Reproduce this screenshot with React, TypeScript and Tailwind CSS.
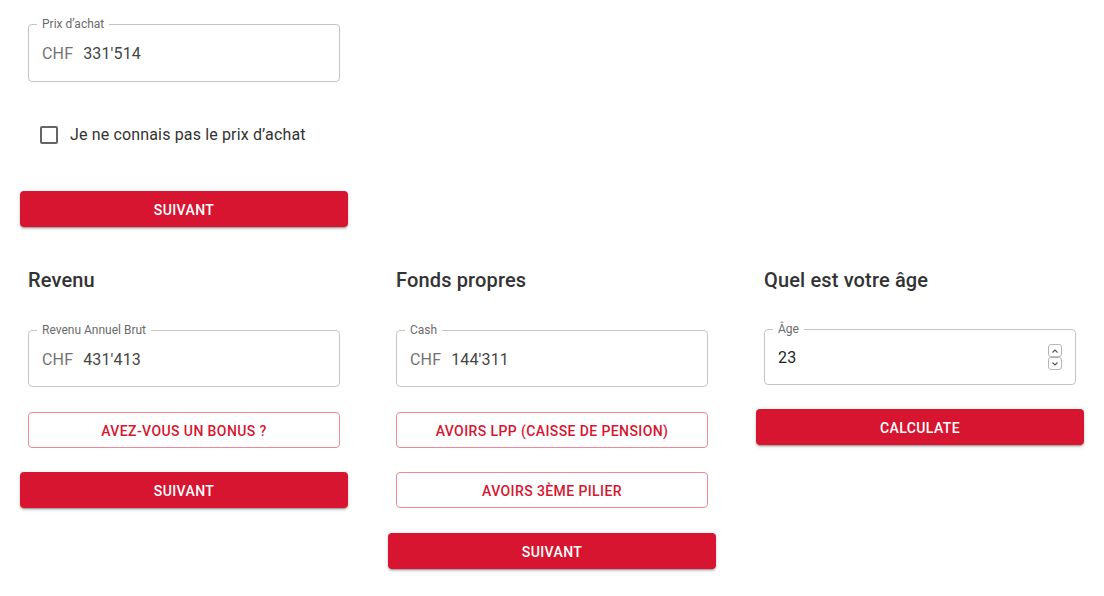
import React from "react";

function OutlinedField({
  label,
  adornment,
  value,
  heightClass = "h-[57px]",
  spinner = false,
}: {
  label: string;
  adornment?: string;
  value: string;
  heightClass?: string;
  spinner?: boolean;
}) {
  return (
    <div className={`relative ${heightClass} rounded-[4px] border border-[#c4c4c4] flex items-center pl-[13px] pr-[13px]`}>
      <span className="absolute left-[8px] top-[-9px] bg-white px-[5px] text-[12px] leading-[16px] text-[#6b6b6b]">
        {label}
      </span>
      {adornment && <span className="pt-[2px] text-[16px] tracking-[0.15px] text-[#737373] mr-[10px]">{adornment}</span>}
      <span className={`pt-[2px] text-[16px] tracking-[0.15px] ${adornment ? "text-[#454545]" : "text-[#1f1f1f]"}`}>{value}</span>
      {spinner && (
        <div className="ml-auto flex flex-col">
          <div className="w-[14px] h-[13px] border border-[#b5b5b5] rounded-[3px] flex items-center justify-center">
            <svg width="8" height="6" viewBox="0 0 8 6" fill="none">
              <path d="M1.5 4.5 L4 2 L6.5 4.5" stroke="#555" strokeWidth="1.1" />
            </svg>
          </div>
          <div className="w-[14px] h-[13px] border border-[#b5b5b5] rounded-[3px] flex items-center justify-center">
            <svg width="8" height="6" viewBox="0 0 8 6" fill="none">
              <path d="M1.5 1.5 L4 4 L6.5 1.5" stroke="#555" strokeWidth="1.1" />
            </svg>
          </div>
        </div>
      )}
    </div>
  );
}

function ContainedButton({ children }: { children: React.ReactNode }) {
  return (
    <button className="w-full h-[36px] pt-[2px] rounded-[4px] bg-[#d71530] text-white text-[14px] font-medium uppercase tracking-[0.4px] shadow-[0_3px_1px_-2px_rgba(0,0,0,0.2),0_2px_2px_0_rgba(0,0,0,0.14),0_1px_5px_0_rgba(0,0,0,0.12)]">
      {children}
    </button>
  );
}

function OutlinedButton({ children }: { children: React.ReactNode }) {
  return (
    <button className="w-full h-[36px] pt-[2px] rounded-[4px] border border-[#ec8a97] bg-white text-[#d71530] text-[14px] font-medium uppercase tracking-[0.4px]">
      {children}
    </button>
  );
}

export default function App() {
  return (
    <div
      className="w-[1104px] h-[596px] bg-white overflow-hidden pl-[20px] pt-[24px]"
      style={{ fontFamily: "Roboto, 'Noto Sans', sans-serif" }}
    >
      {/* Top block */}
      <div className="w-[328px]">
        <div className="px-[8px]">
          <OutlinedField label="Prix d’achat" adornment="CHF" value="331'514" heightClass="h-[58px]" />
        </div>
        <div className="mt-[44px] flex items-center pl-[20px] h-[18px]">
          <div className="w-[18px] h-[18px] border-2 border-[#666] rounded-[2px]" />
          <span className="ml-[12px] text-[16px] tracking-[0.15px] text-[#333]">Je ne connais pas le prix d’achat</span>
        </div>
        <div className="mt-[47px]">
          <ContainedButton>Suivant</ContainedButton>
        </div>
      </div>

      {/* Three columns */}
      <div className="mt-[37px] flex gap-[40px]">
        <div className="w-[328px]">
          <h2 className="px-[8px] h-[32px] leading-[32px] text-[20px] font-medium tracking-[0.15px] text-[#333]">Revenu</h2>
          <div className="mt-[34px] px-[8px]">
            <OutlinedField label="Revenu Annuel Brut" adornment="CHF" value="431'413" />
          </div>
          <div className="mt-[25px] px-[8px]">
            <OutlinedButton>Avez-vous un bonus ?</OutlinedButton>
          </div>
          <div className="mt-[24px]">
            <ContainedButton>Suivant</ContainedButton>
          </div>
        </div>

        <div className="w-[328px]">
          <h2 className="px-[8px] h-[32px] leading-[32px] text-[20px] font-medium tracking-[0.15px] text-[#333]">Fonds propres</h2>
          <div className="mt-[34px] px-[8px]">
            <OutlinedField label="Cash" adornment="CHF" value="144'311" />
          </div>
          <div className="mt-[25px] px-[8px]">
            <OutlinedButton>Avoirs LPP (caisse de pension)</OutlinedButton>
          </div>
          <div className="mt-[24px] px-[8px]">
            <OutlinedButton>Avoirs 3ème pilier</OutlinedButton>
          </div>
          <div className="mt-[25px]">
            <ContainedButton>Suivant</ContainedButton>
          </div>
        </div>

        <div className="w-[328px]">
          <h2 className="px-[8px] h-[32px] leading-[32px] text-[20px] font-medium tracking-[0.15px] text-[#333]">Quel est votre âge</h2>
          <div className="mt-[33px] px-[8px]">
            <OutlinedField label="Âge" value="23" heightClass="h-[56px]" spinner />
          </div>
          <div className="mt-[24px]">
            <ContainedButton>Calculate</ContainedButton>
          </div>
        </div>
      </div>
    </div>
  );
}
